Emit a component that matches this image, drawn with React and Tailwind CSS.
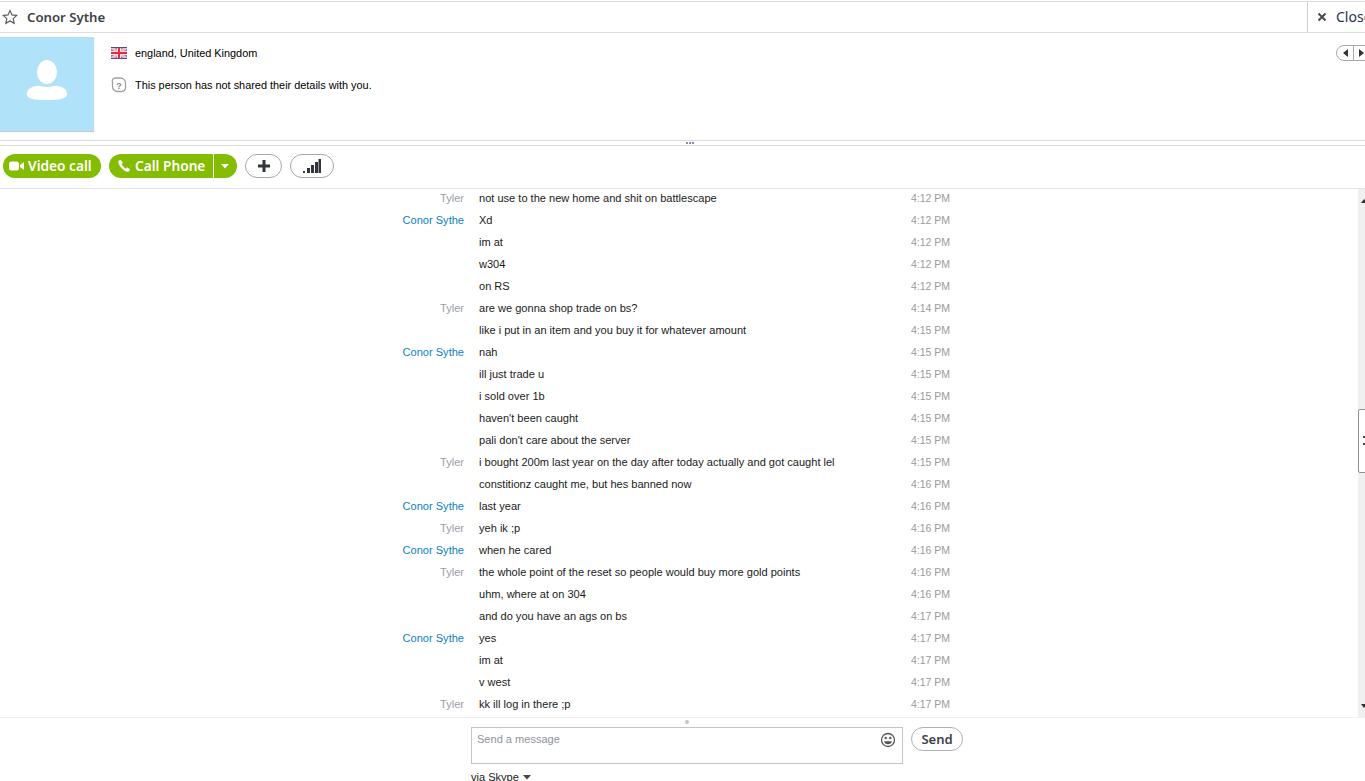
import React from "react";

const rows = [
  ["Tyler", "not use to the new home and shit on battlescape", "4:12 PM"],
  ["Conor Sythe", "Xd", "4:12 PM"],
  ["", "im at", "4:12 PM"],
  ["", "w304", "4:12 PM"],
  ["", "on RS", "4:12 PM"],
  ["Tyler", "are we gonna shop trade on bs?", "4:14 PM"],
  ["", "like i put in an item and you buy it for whatever amount", "4:15 PM"],
  ["Conor Sythe", "nah", "4:15 PM"],
  ["", "ill just trade u", "4:15 PM"],
  ["", "i sold over 1b", "4:15 PM"],
  ["", "haven't been caught", "4:15 PM"],
  ["", "pali don't care about the server", "4:15 PM"],
  ["Tyler", "i bought 200m last year on the day after today actually and got caught lel", "4:15 PM"],
  ["", "constitionz caught me, but hes banned now", "4:16 PM"],
  ["Conor Sythe", "last year", "4:16 PM"],
  ["Tyler", "yeh ik ;p", "4:16 PM"],
  ["Conor Sythe", "when he cared", "4:16 PM"],
  ["Tyler", "the whole point of the reset so people would buy more gold points", "4:16 PM"],
  ["", "uhm, where at on 304", "4:16 PM"],
  ["", "and do you have an ags on bs", "4:17 PM"],
  ["Conor Sythe", "yes", "4:17 PM"],
  ["", "im at", "4:17 PM"],
  ["", "v west", "4:17 PM"],
  ["Tyler", "kk ill log in there ;p", "4:17 PM"],
];

function Flag() {
  return (
    <svg width="16" height="12" viewBox="0 0 16 12" className="block">
      <rect width="16" height="12" fill="#7a80d0" />
      <path d="M0 0L16 12M16 0L0 12" stroke="#f4b8c8" strokeWidth="3" />
      <path d="M8 0V12M0 6H16" stroke="#f8e4ea" strokeWidth="4" />
      <path d="M8 0V12M0 6H16" stroke="#ee2a35" strokeWidth="2" />
      <path d="M0 .5H16M0 11.500H16" stroke="#4a4f94" />
    </svg>
  );
}

function Row({ r }) {
  const tyler = r[0] === "Tyler";
  return (
    <div className="flex h-[22px] items-center">
      <div className={`w-[464px] shrink-0 text-right ${tyler ? "text-[#9a9ea2]" : "text-[#0a7fc9]"}`}>{r[0]}</div>
      <div className="ml-[15px] w-[432px] shrink-0 text-[#1a1a1a]">{r[1]}</div>
      <div className="text-[10.500px] text-[#9a9a9a]">{r[2]}</div>
    </div>
  );
}

export default function App() {
  return (
    <div className="h-[781px] w-[1365px] overflow-hidden bg-white font-['Liberation_Sans',Arial,sans-serif] text-[11.050px] leading-[16px] text-black">
      <div className="h-px" />
      <header className="flex h-[32px] items-center border-y border-[#dcdcdc]">
        <svg width="16" height="16" viewBox="0 0 16 16" className="ml-[2px]">
          <path d="M8 1.500l2 4.400 4.800.5-3.600 3.200 1 4.700L8 11.900l-4.200 2.400 1-4.700L1.200 6.400 6 5.900z" fill="none" stroke="#555" strokeWidth="1.100" />
        </svg>
        <div className="ml-[9px] flex-1 font-['Noto_Sans',sans-serif] text-[13.200px] font-semibold text-[#3c4148]">Conor Sythe</div>
        <div className="flex h-full w-[58px] items-center overflow-hidden border-l border-[#cfcfcf] pl-[9px]">
          <svg width="10" height="10" viewBox="0 0 10 10" className="shrink-0">
            <path d="M1.500 1.500l7 7M8.500 1.500l-7 7" stroke="#454b52" strokeWidth="2" />
          </svg>
          <span className="ml-[9px] font-['Noto_Sans',sans-serif] text-[14px] text-[#24344e]">Close</span>
        </div>
      </header>
      <section className="flex h-[107px]">
        <div className="mt-[4px] flex h-[94px] w-[94px] items-start justify-center bg-[#b0e2f9] pt-[23px] shadow-[0_1px_1px_#ccc]">
          <svg width="42" height="40" viewBox="0 0 42 40">
            <ellipse cx="21" cy="12" rx="10" ry="12" fill="#fff" />
            <path d="M1 34c0-5 4-7 9-8 4-1 7 1 11 1s7-2 11-1c5 1 9 3 9 8 0 4-4 6-20 6S1 38 1 34z" fill="#fff" />
          </svg>
        </div>
        <div className="ml-[17px] flex-1 pt-[12px] text-[10.900px]">
          <div className="flex h-[16px] items-center">
            <Flag />
            <span className="ml-[8px]">england, United Kingdom</span>
          </div>
          <div className="mt-[16px] flex h-[16px] items-center">
            <svg width="16" height="16" viewBox="0 0 16 16">
              <path d="M4.500 1h4.800a5 5 0 0 1 5.200 5v2.500c1 3.500-1.500 6.500-5 6H6.500a5 5 0 0 1-5-5V5.500C.6 3 2 1 4.500 1z" fill="none" stroke="#a0a0a0" strokeWidth="1.300" />
              <text x="8" y="11.500" textAnchor="middle" fontSize="9" fontWeight="700" fill="#8a8a8a">?</text>
            </svg>
            <span className="ml-[8px]">This person has not shared their details with you.</span>
          </div>
        </div>
        <div className="mr-[-12px] mt-[12px] flex h-[16px] w-[41px] items-center rounded-l-full border border-[#a8a8a8]">
          <svg width="16" height="10" viewBox="0 0 16 10"><path d="M11 1v8L6 5z" fill="#333" /></svg>
          <span className="h-full w-px bg-[#a8a8a8]" />
          <svg width="16" height="10" viewBox="0 0 16 10"><path d="M5 1v8l5-4z" fill="#333" /></svg>
        </div>
      </section>
      <div className="relative h-[6px] border-y border-[#dcdcdc]">
        <span className="absolute left-[686px] top-[1px] flex gap-[1px]">
          <i className="h-[2px] w-[2px] bg-[#7f8fb0]" /><i className="h-[2px] w-[2px] bg-[#7f8fb0]" /><i className="h-[2px] w-[2px] bg-[#7f8fb0]" />
        </span>
      </div>
      <div className="flex h-[42px] items-start pl-[3px] pt-[8px] font-['Noto_Sans',sans-serif]">
        <div className="flex h-[24px] w-[98px] items-center rounded-full bg-[#84bc00] pl-[6px] text-[13.700px] font-semibold text-white">
          <svg width="16" height="10" viewBox="0 0 16 10"><rect x="0" y="0.500" width="10" height="9" rx="2.500" fill="#fff" /><path d="M11 4l4-3v8l-4-3z" fill="#fff" /></svg>
          <span className="ml-[3px]">Video call</span>
        </div>
        <div className="ml-[8px] flex h-[24px] w-[128px] items-center rounded-full bg-[#84bc00] text-[13.700px] font-semibold text-white">
          <svg width="14" height="14" viewBox="0 0 14 14" className="ml-[8px] shrink-0"><path d="M3.500.7L1.300 2C.6 5.800 7 13.500 11.700 12.800l1.500-2.400-3-2.200-1.400 1.300C7.200 8.800 5.300 6.500 4.700 5l1.300-1.200z" fill="#fff" /></svg>
          <span className="ml-[4px] w-[78px] shrink-0 whitespace-nowrap">Call Phone</span>
          <span className="h-full w-px bg-white" />
          <svg width="8" height="5" viewBox="0 0 8 5" className="ml-[7px]"><path d="M0 0h8L4 4.500z" fill="#fff" /></svg>
        </div>
        <div className="ml-[8px] flex h-[24px] w-[37px] items-center justify-center rounded-full border border-[#a8a8a8]">
          <svg width="14" height="14" viewBox="0 0 14 14"><path d="M7 1v12M1 7h12" stroke="#30353c" strokeWidth="3" /></svg>
        </div>
        <div className="ml-[8px] flex h-[24px] w-[44px] items-center justify-center rounded-full border border-[#a8a8a8]">
          <svg width="20" height="16" viewBox="0 0 20 16" fill="#30353c">
            <rect x="1" y="13" width="2" height="2" /><rect x="5" y="10" width="3" height="5" /><rect x="9" y="7" width="3" height="8" /><rect x="13" y="4" width="3" height="11" /><rect x="16.500" y="1" width="2.500" height="14" />
          </svg>
        </div>
      </div>
      <div className="flex h-[530px] border-t border-[#e4e4e4]">
        <div className="w-[1358px] shrink-0 border-b border-[#f0f0f0]">
          <div className="-mt-[2px]">
            {rows.map((r, i) => <Row key={i} r={r} />)}
          </div>
        </div>
        <div className="relative w-[7px] bg-[#f0f0f0]">
          <svg width="7" height="4" viewBox="0 0 7 4" className="absolute left-[3px] top-[10px]"><path d="M0 4l3-4 3 4z" fill="#333" /></svg>
          <div className="absolute left-0 top-[220px] h-[64px] w-[10px] rounded-l-[2px] border border-[#8f8f8f] bg-white">
            <span className="absolute left-[4px] top-[26px] h-[9px] w-[3px] border-y-2 border-[#444]" />
          </div>
          <svg width="7" height="4" viewBox="0 0 7 4" className="absolute left-[3px] top-[515px]"><path d="M0 0l3 4 3-4z" fill="#333" /></svg>
        </div>
      </div>
      <div className="relative pl-[471px] pt-[9px]">
        <span className="absolute left-[685px] top-[2px] h-[4px] w-[4px] rounded-full bg-[#b9c6d3]" />
        <div className="flex items-center">
          <div className="flex h-[37px] w-[432px] items-start justify-between border border-[#c4c4c4] pl-[5px] pr-[6px] pt-[3px] text-[#8f9499]">
            <span>Send a message</span>
            <svg width="16" height="16" viewBox="0 0 16 16" className="mt-[1px]">
              <circle cx="8" cy="8" r="6.500" fill="none" stroke="#555" strokeWidth="1.300" />
              <circle cx="5.700" cy="6" r="1.200" fill="#555" /><circle cx="10.300" cy="6" r="1.200" fill="#555" />
              <path d="M4 9.300h8c-.5 2-2 3-4 3s-3.500-1-4-3z" fill="#555" />
            </svg>
          </div>
          <div className="ml-[8px] flex h-[24px] w-[52px] items-center justify-center self-start rounded-full border border-[#b0b0b0] font-['Noto_Sans',sans-serif] text-[13px] font-semibold text-[#3c4148]">Send</div>
        </div>
        <div className="mt-[5px] flex items-center text-[#1a1a1a]">
          <span>via Skype</span>
          <svg width="8" height="5" viewBox="0 0 8 5" className="ml-[4px]"><path d="M0 0h8L4 4.500z" fill="#444" /></svg>
        </div>
      </div>
    </div>
  );
}
